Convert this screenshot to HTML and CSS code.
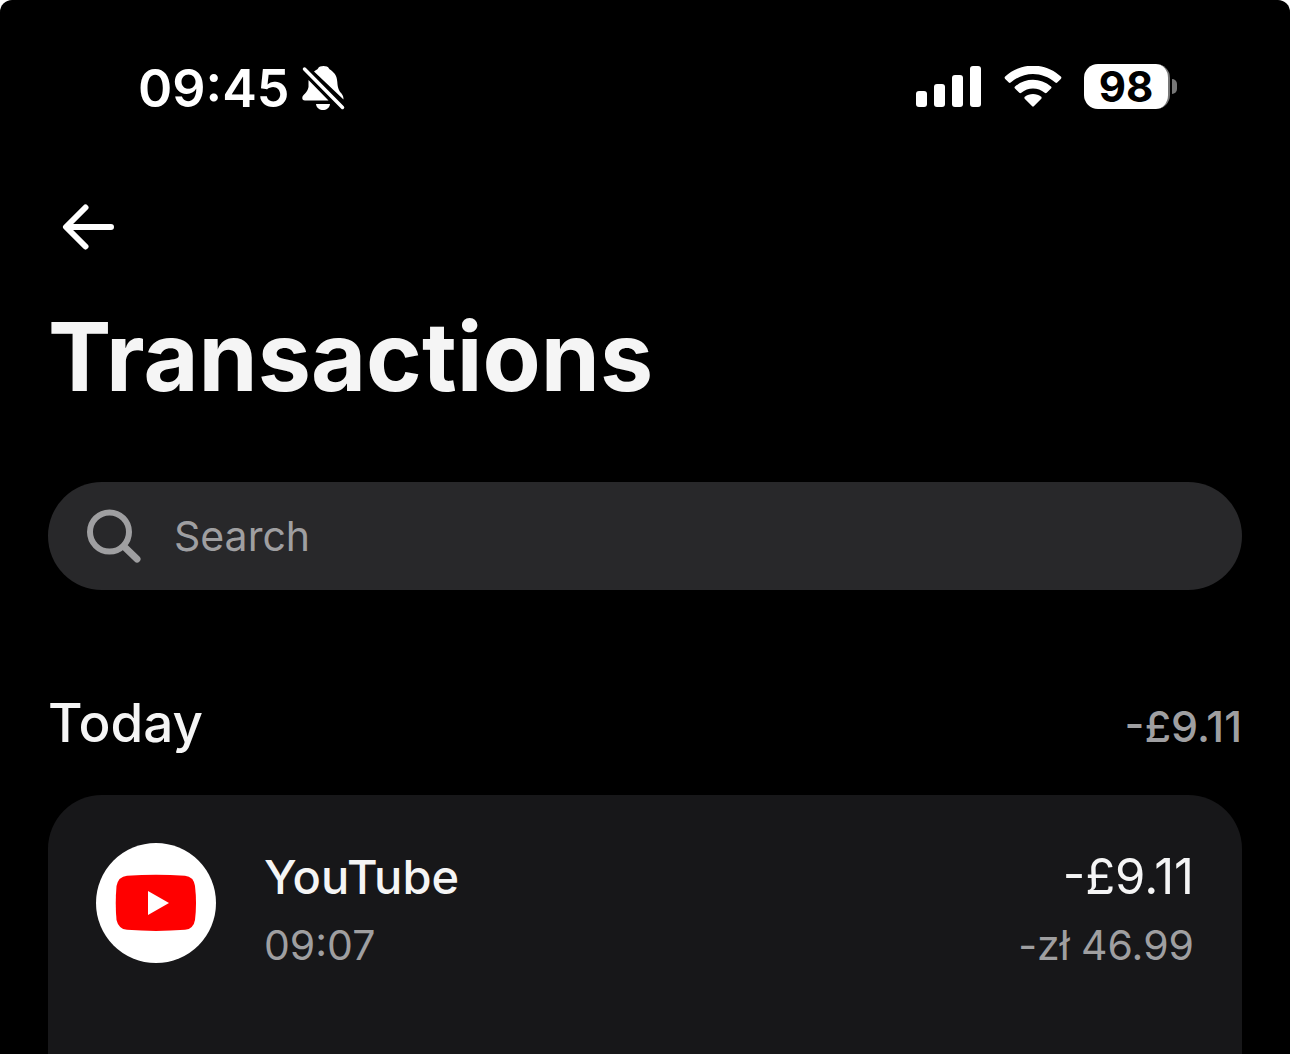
FILE: index.html
```html
<!DOCTYPE html>
<html lang="en">
<head>
  <meta charset="UTF-8" />
  <meta name="viewport" content="width=device-width, initial-scale=1" />
  <title>Transactions</title>
  <link rel="stylesheet" href="styles.css">
</head>
<body>
  <div class="app">

    <div class="status-bar">
      <div class="status-left">
        <span class="clock">09:45</span>
        <svg width="43" height="46" viewBox="0 0 43 46" aria-hidden="true">
          <path fill="#fff" d="M6.500 15 L26.500 35.500 H3 Q0 35.500 0.300 32.500 C0.500 29.500 5.500 28 6.500 22 Z" />
          <path fill="#fff" d="M12 6.500 C14 5 15.500 4.500 16 3.500 C17.500 0.300 25.500 0.300 27 3.500 C27.500 4.500 29 5 30.500 6.500 C34 9.500 35 12.500 35.300 17 C35.600 23 37 26 39.500 28.500 C41 30.500 41.500 32 41.500 34.500 Z" />
          <path fill="#fff" d="M14 39 H28 C27 47 15 47 14 39 Z" />
          <path stroke="#000" stroke-width="8" d="M4 5.500 L38 40" />
          <path stroke="#fff" stroke-width="3.500" stroke-linecap="round" d="M2.500 4 L40.500 42.500" />
        </svg>
      </div>
      <div class="status-right">
        <svg width="66" height="42" viewBox="0 0 66 42" fill="#fff" aria-hidden="true">
          <rect x="0" y="25" width="11" height="16" rx="3" />
          <rect x="18" y="18" width="11" height="23" rx="3" />
          <rect x="36" y="9" width="11" height="32" rx="3" />
          <rect x="54" y="0" width="11" height="41" rx="3" />
        </svg>
        <svg width="58" height="42" viewBox="0 0 58 42" fill="#fff" aria-hidden="true">
          <path d="M1.200 10.500 C17 -4 41 -4 56.800 10.500 Q58 11.700 56.800 12.900 L53.200 16.500 Q52.300 17.400 51.300 16.500 C38 5 20 5 6.700 16.500 Q5.700 17.400 4.800 16.500 L1.200 12.900 Q0 11.700 1.200 10.500 Z" />
          <path d="M11 20.500 C21.500 11.500 36.500 11.500 47 20.500 Q48 21.500 47 22.500 L42.700 26.700 Q41.700 27.600 40.700 26.700 C34 21 24 21 17.300 26.700 Q16.300 27.600 15.300 26.700 L11 22.500 Q10 21.500 11 20.500 Z" />
          <path d="M20.800 30.800 C25.500 27 32.500 27 37.200 30.800 Q38.200 31.700 37.300 32.700 L29.800 40.300 Q29 41 28.200 40.300 L20.700 32.700 Q19.800 31.700 20.800 30.800 Z" />
        </svg>
        <div class="battery">
          <span class="battery-level">98</span>
          <span class="battery-tip"></span>
        </div>
      </div>
    </div>

    <header class="top-bar">
      <button class="back" type="button" aria-label="Back">
        <svg width="52" height="46" viewBox="0 0 52 46" fill="none" stroke="#fff" stroke-width="6" stroke-linecap="round" stroke-linejoin="round" aria-hidden="true">
          <path d="M23.500 3.500 L4 23 L23.500 42.500 M5 23 H49" />
        </svg>
      </button>
      <h1>Transactions</h1>
    </header>

    <main>
      <form class="search" role="search">
        <label for="search" aria-label="Search">
          <svg width="56" height="56" viewBox="0 0 56 56" fill="none" stroke="#9f9fa1" aria-hidden="true">
            <circle cx="23.500" cy="24" r="19.500" stroke-width="6" />
            <path d="M38 38.500 L51 51" stroke-width="7" stroke-linecap="round" />
          </svg>
        </label>
        <input type="text" id="search" placeholder="Search" />
      </form>

      <section class="day">
        <div class="day-header">
          <h2>Today</h2>
          <span class="day-total">-£9.11</span>
        </div>

        <ul class="card">
          <li class="transaction">
            <span class="avatar">
              <svg width="82" height="58" viewBox="0 0 82 58" aria-hidden="true">
                <path fill="#f00" d="M12 1.800 Q41 -0.500 70 1.800 Q78.500 2.500 80 12 Q82 29 80 46 Q78.500 55 70 55.800 Q41 58 12 55.800 Q3.500 55 1.500 46 Q0 29 1.500 12 Q3.500 2.500 12 1.800 Z" />
                <path fill="#fff" d="M33 17 L54 29 L33 41 Z" />
              </svg>
            </span>
            <div class="details">
              <span class="name">YouTube</span>
              <span class="sub">09:07</span>
            </div>
            <div class="details amounts">
              <span class="amount">-£9.11</span>
              <span class="sub">-zł 46.99</span>
            </div>
          </li>
        </ul>
      </section>
    </main>

  </div>
</body>
</html>
```

FILE: styles.css
```css
* { margin: 0; padding: 0; box-sizing: border-box; }

body {
  font-family: Inter, sans-serif;
  background-color: #fff;
  color: #f5f5f5;
}

svg { display: block; }

.app {
  display: flex;
  flex-direction: column;
  min-height: 100vh;
  background-color: #000;
  border-radius: 12px 12px 0 0;
}

/* Status bar */
.status-bar {
  display: flex;
  justify-content: space-between;
  align-items: center;
  height: 176px;
  padding: 0 113px 0 138px;
  color: #fff;
}

.status-left {
  display: flex;
  align-items: center;
  gap: 13px;
}

.clock {
  font-size: 52px;
  font-weight: 600;
}

.status-right {
  display: flex;
  align-items: center;
  gap: 22px;
  padding-bottom: 3px;
}

.battery {
  display: flex;
  align-items: center;
  gap: 2px;
}

.battery-level {
  width: 86px;
  height: 45px;
  border-radius: 14px;
  border-right: 2px solid #777;
  background-color: #fff;
  color: #000;
  font-size: 42px;
  font-weight: 700;
  line-height: 45px;
  text-align: center;
}

.battery-tip {
  width: 5px;
  height: 15px;
  border-radius: 0 5px 5px 0;
  background-color: #777;
}

/* Header */
.top-bar { padding: 0 48px; }

.back {
  display: flex;
  align-items: center;
  height: 102px;
  padding: 0 14px;
  border: none;
  background: none;
  cursor: pointer;
}

h1 {
  margin-top: 20px;
  font-size: 95px;
  font-weight: 700;
  line-height: 118px;
}

main {
  display: flex;
  flex: 1;
  flex-direction: column;
  padding: 66px 48px 0;
}

/* Search */
.search {
  display: flex;
  align-items: center;
  gap: 32px;
  height: 108px;
  padding: 0 38px;
  border-radius: 54px;
  background-color: #28282a;
}

.search input {
  flex: 1;
  min-width: 0;
  border: none;
  outline: none;
  background: none;
  color: #f5f5f5;
  font-family: inherit;
  font-size: 41px;
}

.search input::placeholder {
  color: #9f9fa1;
  opacity: 1;
}

/* Transactions */
.day {
  display: flex;
  flex: 1;
  flex-direction: column;
  margin-top: 101px;
}

.day-header {
  display: flex;
  justify-content: space-between;
  align-items: baseline;
  margin-bottom: 40px;
}

h2 {
  font-size: 53px;
  font-weight: 500;
  line-height: 64px;
}

.day-total {
  color: #9f9fa1;
  font-size: 43px;
  font-weight: 500;
}

.card {
  flex: 1;
  padding: 48px;
  border-radius: 54px 54px 0 0;
  background-color: #171719;
  list-style: none;
}

.transaction {
  display: flex;
  gap: 48px;
}

.avatar {
  display: flex;
  align-items: center;
  justify-content: center;
  width: 120px;
  height: 120px;
  border-radius: 50%;
  background-color: #fff;
}

.details {
  display: flex;
  flex-direction: column;
  line-height: 68px;
}

.amounts {
  margin-left: auto;
  text-align: right;
}

.name {
  font-size: 47px;
  font-weight: 500;
}

.amount { font-size: 49px; }

.sub {
  color: #9f9fa1;
  font-size: 41px;
}
```
